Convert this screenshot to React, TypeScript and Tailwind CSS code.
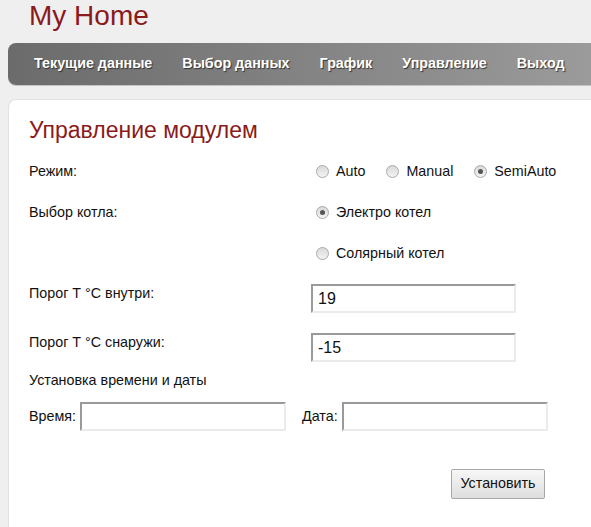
import React from "react";

const font = "font-['Liberation_Sans',Arial,sans-serif]";

function Radio({ checked }: { checked?: boolean }) {
  return (
    <span className="ml-[5px] mr-[7px] inline-flex h-[13px] w-[13px] shrink-0 items-center justify-center rounded-full border border-[#a9a9a9] bg-gradient-to-b from-[#d9d9d9] to-[#f4f4f4]">
      {checked && <span className="h-[5px] w-[5px] rounded-full bg-[#555]" />}
    </span>
  );
}

function TextInput({ value, w }: { value?: string; w: string }) {
  return (
    <div
      className={`${w} flex h-[29px] shrink-0 items-center border-2 border-t-[#9a9a9a] border-l-[#9a9a9a] border-b-[#ebebeb] border-r-[#ebebeb] bg-white pl-[5px] text-[16px] text-[#111]`}
    >
      {value}
    </div>
  );
}

export default function App() {
  const nav = ["Текущие данные", "Выбор данных", "График", "Управление", "Выход"];
  return (
    <div className={`${font} min-h-[527px] w-full overflow-hidden bg-[#efefef] text-[14.3px] text-[#111]`}>
      <div className="pl-[29px] text-[28px] leading-[32px] text-[#8b1a1a]">My Home</div>
      <nav className="ml-[8px] mt-[11px] flex h-[42px] items-center overflow-hidden whitespace-nowrap rounded-l-[8px] bg-gradient-to-r from-[#6b6b6b] to-[#9b9b9b] pl-[11px] shadow-[0_1px_0_#c4c4c4]">
        {nav.map((n) => (
          <span
            key={n}
            className="shrink-0 whitespace-nowrap px-[15px] text-[14.3px] font-bold text-white [text-shadow:1px_1px_1px_#333]"
          >
            {n}
          </span>
        ))}
      </nav>
      <div className="ml-[8px] mt-[14px] min-h-[428px] rounded-tl-[8px] border-t border-l border-[#e2e2e2] bg-white pl-[20px] pt-[18px]">
        <h1 className="text-[23px] font-normal leading-[25px] text-[#8b1a1a]">Управление модулем</h1>
        <div className="mt-[8px] flex w-[517px] flex-col">
          <div className="flex h-[41px] items-center">
            <div className="w-[282px] shrink-0">Режим:</div>
            <div className="flex shrink-0 items-center whitespace-nowrap">
              <Radio />
              <span className="mr-[16px]">Auto</span>
              <Radio />
              <span className="mr-[16px]">Manual</span>
              <Radio checked />
              <span>SemiAuto</span>
            </div>
          </div>
          <div className="flex h-[41px] items-center">
            <div className="w-[282px] shrink-0">Выбор котла:</div>
            <div className="flex items-center">
              <Radio checked />
              <span>Электро котел</span>
            </div>
          </div>
          <div className="flex h-[41px] items-center">
            <div className="w-[282px] shrink-0" />
            <div className="flex items-center">
              <Radio />
              <span>Солярный котел</span>
            </div>
          </div>
          <div className="flex h-[49px] items-center">
            <div className="mb-[9px] w-[282px] shrink-0">Порог Т °C внутри:</div>
            <TextInput value="19" w="w-[205px]" />
          </div>
          <div className="flex h-[49px] items-center">
            <div className="mb-[9px] w-[282px] shrink-0">Порог Т °C снаружи:</div>
            <TextInput value="-15" w="w-[205px]" />
          </div>
          <div className="flex h-[18px] items-center">Установка времени и даты</div>
          <div className="mt-[12px] flex items-center whitespace-nowrap">
            <span className="mr-[4px]">Время:</span>
            <TextInput w="w-[206px]" />
            <span className="ml-[16px] mr-[4px]">Дата:</span>
            <TextInput w="w-[206px]" />
          </div>
          <div className="mt-[38px] flex justify-end pr-[1px]">
            <button className="h-[30px] w-[94px] rounded-[2px] border border-[#a8a8a8] bg-gradient-to-b from-[#f7f7f7] to-[#dedede] text-[14.3px] text-[#111]">
              Установить
            </button>
          </div>
        </div>
      </div>
    </div>
  );
}
